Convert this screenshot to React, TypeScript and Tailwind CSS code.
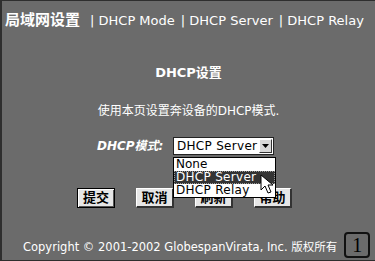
import React from "react";

const cjk = { fontFamily: '"DejaVu Sans", "Noto Sans CJK SC", sans-serif' };

function Btn({ label, primary }: { label: string; primary?: boolean }) {
  return (
    <div
      className={
        "w-[38px] h-[20px] flex items-center justify-center text-[13px] font-bold text-black bg-[#e6e6e6] " +
        (primary
          ? "border border-black shadow-[inset_1px_1px_0_#fff,inset_-1px_-1px_0_#555]"
          : "border-t border-l border-t-[#fff] border-l-[#fff] border-b-2 border-r-2 border-b-[#333] border-r-[#333]")
      }
      style={cjk}
    >
      {label}
    </div>
  );
}

export default function App() {
  return (
    <div
      className="relative w-[375px] h-[261px] bg-[#6b6b6b] border-l-2 border-t border-b border-[#2e2e2e] text-white overflow-hidden flex flex-col"
      style={cjk}
    >
      {/* header */}
      <div className="flex items-center h-[38px] pl-[3px] pt-[1px] text-[13px] whitespace-nowrap">
        <span className="text-[15px] font-bold">局域网设置</span>
        <span className="ml-[10px]">| DHCP Mode</span>
        <span className="ml-[6px]">| DHCP Server</span>
        <span className="ml-[6px]">| DHCP Relay</span>
      </div>

      <div className="flex justify-center mt-[26px] text-[13px] font-bold leading-[16px]">DHCP设置</div>
      <div className="flex justify-center mt-[22px] text-[12px] leading-[16px]">使用本页设置奔设备的DHCP模式.</div>

      <div className="relative z-10 flex items-center mt-[18px] ml-[95px] h-[18px]">
        <span className="w-[76px] text-[12px] font-bold italic">DHCP模式:</span>
        <div className="relative w-[101px] h-[18px] bg-white border border-[#222] flex items-center text-black text-[12px]">
          <span className="pl-[3px] tracking-[0.3px]">DHCP Server</span>
          <div className="absolute right-[1px] top-[1px] w-[13px] h-[14px] bg-[#d8d8d8] border-t border-l border-white border-b border-r border-b-[#333] border-r-[#333] flex items-center justify-center">
            <svg width="7" height="4" viewBox="0 0 7 4">
              <path d="M0 0h7L3.5 4z" fill="#000" />
            </svg>
          </div>
          {/* dropdown list */}
          <div className="absolute left-[-1px] top-[19px] w-[103px] bg-white border border-black text-black text-[12px] leading-[13px] z-10">
            <div className="pl-[2px] h-[13px]">None</div>
            <div className="pl-[2px] h-[13px] bg-[#333] text-white outline-dotted outline-1 outline-[#999] -outline-offset-1 tracking-[0.3px]">DHCP Server</div>
            <div className="pl-[2px] h-[13px] tracking-[0.3px]">DHCP Relay</div>
          </div>
          {/* cursor */}
          <svg className="absolute left-[86px] top-[36px] z-20" width="14" height="21" viewBox="0 0 14 21">
            <path d="M1 1v15l4-4 3 7 3-1-3-7h5z" fill="#fff" stroke="#000" strokeWidth="1" />
          </svg>
        </div>
      </div>

      <div className="flex gap-[21px] mt-[33px] ml-[75px]">
        <Btn label="提交" primary />
        <Btn label="取消" />
        <Btn label="刷新" />
        <Btn label="帮助" />
      </div>

      <div className="flex items-center mt-[30px] ml-[21px] text-[11.5px] whitespace-nowrap">
        <span>Copyright © 2001-2002 GlobespanVirata, Inc. 版权所有</span>
        <div
          className="ml-[7px] w-[26px] h-[26px] border-2 border-[#111] rounded-[4px] flex items-center justify-center text-black text-[20px] -mt-[6px]"
          style={{ fontFamily: '"Liberation Serif", serif' }}
        >
          1
        </div>
      </div>
    </div>
  );
}
